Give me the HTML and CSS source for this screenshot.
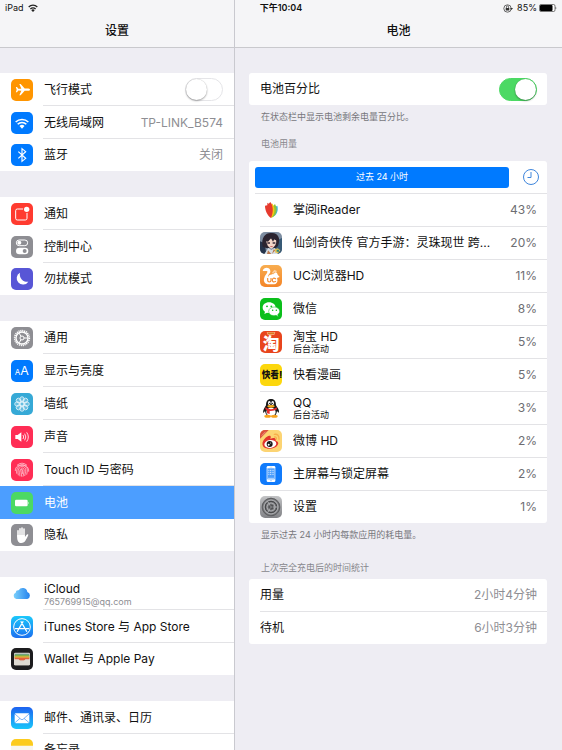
FILE: index.html
```html
<!DOCTYPE html>
<html lang="zh-CN">
<head>
<meta charset="utf-8">
<meta name="viewport" content="width=device-width, initial-scale=1">
<title>设置</title>
<link rel="stylesheet" href="styles.css">
</head>
<body>
<div class="app">
  <nav class="pane sidebar" aria-label="设置">
    <header class="navbar"><h1>设置</h1></header>

    <div class="group">
      <div class="row">
        <svg class="icon" viewBox="0 0 66 66"><rect width="66" height="66" rx="15" fill="#ff9500"/><path fill="#fff" d="M57 32C57 29 53 28.500 49 28.500H41L29 15H25L31 29L22 29.500L18 24H14.500L17 32L14.500 40H18L22 34.500L31 35L25 49H29L41 35.500H49C53 35.500 57 35 57 32Z"/></svg>
        <label class="label" for="airplane">飞行模式</label>
        <input class="switch" type="checkbox" role="switch" id="airplane">
      </div>
      <a class="row" href="#wifi">
        <svg class="icon" viewBox="0 0 66 66"><rect width="66" height="66" rx="15" fill="#007aff"/><g fill="none" stroke="#fff" stroke-width="4.500"><path d="M14 30A27 27 0 0 1 52 30"/><path d="M20 37A18 18 0 0 1 46 37"/></g><path fill="#fff" d="M33 50L25.500 42A11 11 0 0 1 40.500 42Z"/></svg>
        <span class="label">无线局域网</span><span class="value">TP-LINK_B574</span>
      </a>
      <a class="row" href="#bluetooth">
        <svg class="icon" viewBox="0 0 66 66"><rect width="66" height="66" rx="15" fill="#007aff"/><path fill="none" stroke="#fff" stroke-width="3.500" d="M22 23L44 43L33 52V14L44 23L22 43"/></svg>
        <span class="label">蓝牙</span><span class="value">关闭</span>
      </a>
    </div>

    <div class="group">
      <a class="row" href="#notifications">
        <svg class="icon" viewBox="0 0 66 66"><rect width="66" height="66" rx="15" fill="#ff3b30"/><rect x="14" y="18" width="34" height="33" rx="5" fill="none" stroke="#fff" stroke-width="3"/><circle cx="47" cy="19" r="11" fill="#ff3b30"/><circle cx="47" cy="19" r="8" fill="#fff"/></svg>
        <span class="label">通知</span>
      </a>
      <a class="row" href="#control-center">
        <svg class="icon" viewBox="0 0 66 66"><rect width="66" height="66" rx="15" fill="#8e8e93"/><rect x="16" y="12" width="34" height="17" rx="8.500" fill="none" stroke="#fff" stroke-width="3"/><circle cx="25" cy="20.500" r="6" fill="#fff"/><rect x="15" y="35" width="37" height="20" rx="10" fill="#fff"/><circle cx="41" cy="45" r="6" fill="#8e8e93"/></svg>
        <span class="label">控制中心</span>
      </a>
      <a class="row" href="#dnd">
        <svg class="icon" viewBox="0 0 66 66"><rect width="66" height="66" rx="15" fill="#5856d6"/><path fill="#fff" d="M27 14A19 19 0 1 0 52 41A22 22 0 0 1 27 14Z"/></svg>
        <span class="label">勿扰模式</span>
      </a>
    </div>

    <div class="group">
      <a class="row" href="#general">
        <svg class="icon" viewBox="0 0 66 66"><rect width="66" height="66" rx="15" fill="#8e8e93"/><g fill="none" stroke="#fff"><circle cx="33" cy="33" r="22" stroke-width="5" stroke-dasharray="3.400 2.359"/><circle cx="33" cy="33" r="18" stroke-width="4"/><circle cx="33" cy="33" r="6" stroke-width="3"/><path stroke-width="3" d="M39 33H50M30 28L24.500 18.500M30 38L24.500 47.500"/></g></svg>
        <span class="label">通用</span>
      </a>
      <a class="row" href="#display">
        <svg class="icon" viewBox="0 0 66 66"><rect width="66" height="66" rx="15" fill="#007aff"/><text class="glyph" x="11" y="45" font-size="24">A</text><text class="glyph" x="28" y="45" font-size="37">A</text></svg>
        <span class="label">显示与亮度</span>
      </a>
      <a class="row" href="#wallpaper">
        <svg class="icon" viewBox="0 0 66 66"><rect width="66" height="66" rx="15" fill="#36a9d6"/><g fill="#fff" fill-opacity=".25" stroke="#fff" stroke-width="2"><ellipse cx="33" cy="19" rx="6.500" ry="8"/><ellipse cx="33" cy="19" rx="6.500" ry="8" transform="rotate(45 33 33)"/><ellipse cx="33" cy="19" rx="6.500" ry="8" transform="rotate(90 33 33)"/><ellipse cx="33" cy="19" rx="6.500" ry="8" transform="rotate(135 33 33)"/><ellipse cx="33" cy="19" rx="6.500" ry="8" transform="rotate(180 33 33)"/><ellipse cx="33" cy="19" rx="6.500" ry="8" transform="rotate(225 33 33)"/><ellipse cx="33" cy="19" rx="6.500" ry="8" transform="rotate(270 33 33)"/><ellipse cx="33" cy="19" rx="6.500" ry="8" transform="rotate(315 33 33)"/><circle cx="33" cy="33" r="6"/></g></svg>
        <span class="label">墙纸</span>
      </a>
      <a class="row" href="#sounds">
        <svg class="icon" viewBox="0 0 66 66"><rect width="66" height="66" rx="15" fill="#ff2d55"/><path fill="#fff" d="M13 27H20L31 19V47L20 39H13Z"/><g fill="none" stroke="#fff" stroke-width="2.500"><path d="M36 27Q40 33 36 39"/><path d="M41 23Q48 33 41 43"/><path d="M47 19Q57 33 47 47"/></g></svg>
        <span class="label">声音</span>
      </a>
      <a class="row" href="#touch-id">
        <svg class="icon" viewBox="0 0 66 66"><rect width="66" height="66" rx="15" fill="#ff2d55"/><g fill="none" stroke="#fff" stroke-opacity=".85" stroke-width="2"><path d="M18 19Q33 6 48 19"/><path d="M13 36C11 12 55 10 53 38"/><path d="M17 44C13 10 52 12 49 36L47 47"/><path d="M22 49C15 15 48 16 44 37L41 51"/><path d="M27 52C21 21 43 22 39 38L36 53"/><path d="M32 53L30 35Q33 25 35 36L34 45"/></g></svg>
        <span class="label">Touch ID 与密码</span>
      </a>
      <a class="row selected" href="#battery" aria-current="page">
        <svg class="icon" viewBox="0 0 66 66"><rect width="66" height="66" rx="15" fill="#4cd964"/><rect x="12" y="23" width="38" height="20" rx="4" fill="#fff"/><path fill="#fff" d="M52 29Q56 33 52 37Z"/></svg>
        <span class="label">电池</span>
      </a>
      <a class="row" href="#privacy">
        <svg class="icon" viewBox="0 0 66 66"><rect width="66" height="66" rx="15" fill="#8e8e93"/><g fill="none" stroke="#fff" stroke-width="4.500" stroke-linecap="round"><path d="M21 20V38M27 14V36M33 12V36M39 15V38"/></g><path fill="#fff" d="M18.500 33H41.500V39C45 36 47 30 51 31C54 32 48 42 44 49C41 55 37 57 31 57C22 57 18.500 49 18.500 41Z"/></svg>
        <span class="label">隐私</span>
      </a>
    </div>

    <div class="group">
      <a class="row" href="#icloud">
        <svg class="icon" viewBox="0 0 66 66"><defs><linearGradient id="cloud" x1="0" x2="1"><stop stop-color="#7bd0fb"/><stop offset="1" stop-color="#2482ee"/></linearGradient></defs><path fill="url(#cloud)" d="M16 48A10 10 0 0 1 14 29A8 8 0 0 1 23 22A14 14 0 0 1 49 27A11 11 0 0 1 49 48Z"/></svg>
        <span class="label">iCloud<small class="account">765769915@qq.com</small></span>
      </a>
      <a class="row" href="#store">
        <svg class="icon" viewBox="0 0 66 66"><defs><linearGradient id="store" x2="0" y2="1"><stop stop-color="#1bc8fb"/><stop offset="1" stop-color="#1c70f0"/></linearGradient></defs><rect width="66" height="66" rx="15" fill="url(#store)"/><g fill="none" stroke="#fff" stroke-width="3.500"><circle cx="33" cy="33" r="25" stroke-width="3"/><path d="M36 17L19 46M30 17L47 46M13 38H39M45 38H53" stroke-linecap="round"/></g></svg>
        <span class="label">iTunes Store 与 App Store</span>
      </a>
      <a class="row" href="#wallet">
        <svg class="icon" viewBox="0 0 66 66"><rect width="66" height="66" rx="15" fill="#1c1c1e"/><rect x="9" y="14" width="48" height="38" rx="4" fill="#d8d4cc"/><rect x="11" y="17" width="44" height="8" rx="3" fill="#6a9c9a"/><rect x="11" y="20" width="44" height="9" fill="#7fb04b"/><rect x="11" y="25" width="44" height="6" fill="#e3b43b"/><rect x="11" y="29" width="44" height="8" fill="#e2613c"/><path fill="#dedad2" d="M9 34H23Q27 41 33 41Q39 41 43 34H57V49Q57 52 54 52H12Q9 52 9 49Z"/></svg>
        <span class="label">Wallet 与 Apple Pay</span>
      </a>
    </div>

    <div class="group">
      <a class="row" href="#mail">
        <svg class="icon" viewBox="0 0 66 66"><defs><linearGradient id="mail" x2="0" y2="1"><stop stop-color="#1d62f0"/><stop offset="1" stop-color="#19c7fb"/></linearGradient></defs><rect width="66" height="66" rx="15" fill="url(#mail)"/><rect x="11" y="19" width="44" height="30" rx="4" fill="#fff"/><path fill="none" stroke="#3b90f3" stroke-width="2" d="M12 21L30 37Q33 39 36 37L54 21M12 47L27 34M54 47L39 34"/></svg>
        <span class="label">邮件、通讯录、日历</span>
      </a>
      <a class="row" href="#notes">
        <svg class="icon" viewBox="0 0 66 66"><rect width="66" height="66" rx="15" fill="#f8f6ee"/><path fill="#fccb1d" d="M0 20V15A15 15 0 0 1 15 0H51A15 15 0 0 1 66 15V20Z"/><path stroke="#c9c6bd" stroke-width="2" d="M0 35H66M0 50H66"/></svg>
        <span class="label">备忘录</span>
      </a>
    </div>
  </nav>

  <main class="pane detail">
    <header class="navbar"><h2>电池</h2></header>

    <div class="card">
      <div class="row">
        <label class="label" for="percentage">电池百分比</label>
        <input class="switch" type="checkbox" role="switch" id="percentage" checked>
      </div>
    </div>
    <p class="note">在状态栏中显示电池剩余电量百分比。</p>

    <h3 class="heading">电池用量</h3>
    <div class="card usage">
      <div class="row tabs">
        <button class="period" type="button">过去 24 小时</button>
        <button class="clock" type="button" aria-label="显示使用时间"><svg viewBox="0 0 18 18"><circle cx="9" cy="9" r="7.500"/><path d="M9 4V9.500H5.500"/></svg></button>
      </div>
      <div class="row">
        <svg class="icon" viewBox="0 0 66 66"><path fill="#3bb7d9" d="M38 53C50 49 56 34 52 20C43 23 36 39 38 53Z"/><path fill="#8fc13a" d="M35 56C50 50 54 30 45 15C34 23 30 43 35 56Z"/><path fill="#f9c80e" d="M34 57C46 45 46 25 36 13C27 25 27 43 34 57Z"/><path fill="#e63a2e" d="M33 57C41 40 40 20 31 9L26 14L22 11V19L15 20C15 34 22 49 33 57Z"/></svg>
        <span class="label">掌阅iReader</span><span class="value">43%</span>
      </div>
      <div class="row">
        <svg class="icon" viewBox="0 0 66 66"><defs><clipPath id="tile"><rect width="66" height="66" rx="15"/></clipPath></defs><g clip-path="url(#tile)"><path fill="#7d8da1" d="M0 0H66V66H0Z"/><path fill="#25334a" d="M0 28L14 34L19 66H0Z"/><path fill="#385a76" d="M48 26L66 18V66H46Z"/><path fill="#2b2430" d="M8 44C2 15 18 1 35 3C54 2 63 19 54 42L47 48H19Z"/><path fill="#f3d5c6" d="M18 24Q34 13 49 25Q50 43 34 50Q21 46 18 24Z"/><path fill="#2b2430" d="M14 26Q17 9 34 9Q49 9 53 28L43 22L39 29L33 19L24 29Z"/><path fill="#3b2b38" d="M22 31H30V35H22ZM38 31H46V35H38Z"/><path fill="#c44b4b" d="M31 42H38V44H31Z"/><path fill="#d7dfe5" d="M13 66L25 48L34 54L44 48L54 66Z"/><path fill="#b9774d" d="M24 55L34 66H21ZM41 52L46 55L36 66Z"/><path fill="#e8c452" d="M44 52L53 49L61 55L54 64L46 62Z"/><path fill="#2d8a7a" d="M50 53H57V59H50Z"/></g></svg>
        <span class="label">仙剑奇侠传 官方手游：灵珠现世 跨...</span><span class="value">20%</span>
      </div>
      <div class="row">
        <svg class="icon" viewBox="0 0 66 66"><defs><linearGradient id="uc" x2="0" y2="1"><stop stop-color="#f8ad4f"/><stop offset="1" stop-color="#f48528"/></linearGradient></defs><rect width="66" height="66" rx="15" fill="url(#uc)"/><path fill="#fff" d="M8 18C11 5 30 6 31 18C32 26 23 29 24 36C30 25 40 31 43 25C46 19 52 23 53 29L59 36L51 39C55 49 50 57 43 58H27C14 58 9 48 13 38C15 30 23 25 22 19C19 16 14 19 8 18Z"/><path fill="none" stroke="#f48d32" stroke-width="3.500" d="M23 39V46Q23 51 28 51Q33 51 33 46V39M48 42Q38 36 37 45Q37 54 48 49"/><path fill="#fbd1a2" d="M36 23L43 14L51 18L48 23L42 21L40 27Z"/></svg>
        <span class="label">UC浏览器HD</span><span class="value">11%</span>
      </div>
      <div class="row">
        <svg class="icon" viewBox="0 0 66 66"><rect width="66" height="66" rx="15" fill="#0bbf1b"/><path fill="#fff" d="M27 13C16 13 8 20 8 29C8 34 11 38 15 41L13 48L21 44C23 45 25 45 28 45C39 45 47 38 47 29C47 20 38 13 27 13Z"/><path fill="#fff" stroke="#0bbf1b" stroke-width="1.500" d="M43 27C33 27 26 33 26 40C26 48 33 53 42 53L48 52L55 56L53 50C57 47 59 44 59 40C59 33 52 27 43 27Z"/><g fill="#0bbf1b"><circle cx="21" cy="25" r="2.800"/><circle cx="34" cy="25" r="2.800"/><circle cx="38" cy="37" r="2.300"/><circle cx="49" cy="37" r="2.300"/></g></svg>
        <span class="label">微信</span><span class="value">8%</span>
      </div>
      <div class="row">
        <svg class="icon" viewBox="0 0 66 66"><rect width="66" height="66" rx="15" fill="#e8451d"/><path fill="#f7a36d" d="M20 3H46L43 12H23Z"/><path fill="#d8791e" d="M24 5H42V9H24Z"/><text class="glyph heavy" x="8" y="57" font-size="50">淘</text></svg>
        <span class="label">淘宝 HD<small class="activity">后台活动</small></span><span class="value">5%</span>
      </div>
      <div class="row">
        <svg class="icon" viewBox="0 0 66 66"><rect width="66" height="66" rx="15" fill="#fcd70d"/><text class="glyph heavy dark" x="5" y="43" font-size="26">快看!</text></svg>
        <span class="label">快看漫画</span><span class="value">5%</span>
      </div>
      <div class="row">
        <svg class="icon" viewBox="0 0 66 66"><path fill="#181818" d="M33 6C22 6 18 14 18 25C14 32 9 38 9 47C11 48 14 44 15 42C16 48 19 54 23 57H44C48 54 50 48 51 42C53 45 56 48 57 46C58 38 52 32 48 25C48 14 44 6 33 6Z"/><ellipse cx="33" cy="45" rx="14" ry="13" fill="#fff"/><ellipse cx="28" cy="18" rx="4" ry="6" fill="#fff"/><ellipse cx="38" cy="18" rx="4" ry="6" fill="#fff"/><circle cx="29" cy="19" r="2"/><circle cx="37" cy="19" r="2"/><ellipse cx="33" cy="28" rx="11" ry="4" fill="#f8ac1d"/><path fill="#e52a2d" d="M16 31Q33 43 50 31L51 37Q42 43 29 42V51L21 49V40L16 37Z"/><ellipse cx="23" cy="58" rx="10" ry="4.500" fill="#f7a21c"/><ellipse cx="43" cy="58" rx="10" ry="4.500" fill="#f7a21c"/></svg>
        <span class="label">QQ<small class="activity">后台活动</small></span><span class="value">3%</span>
      </div>
      <div class="row">
        <svg class="icon" viewBox="0 0 66 66"><g clip-path="url(#tile)"><path fill="#fcd473" d="M0 0H66V66H0Z"/><path fill="#dc4f3d" d="M0 0H26L0 26Z"/><path stroke="#f3b6a3" stroke-width="2" d="M5 17L17 5"/><path fill="#e2332c" d="M28 17C33 16 33 22 31 27C40 22 49 24 47 32C54 34 57 39 53 45C46 57 23 60 12 52C-1 40 16 19 28 17Z"/><ellipse cx="31" cy="42" rx="18" ry="12" fill="#fff" transform="rotate(-7 31 42)"/><circle cx="29" cy="42" r="9" fill="#171717"/><circle cx="26" cy="44" r="3" fill="#fff"/><circle cx="32" cy="39" r="1.500" fill="#fff"/><path fill="none" stroke="#f7ae4a" stroke-width="4" stroke-linecap="round" d="M43 13Q58 11 57 28M44 21Q50 20 49 27"/></g></svg>
        <span class="label">微博 HD</span><span class="value">2%</span>
      </div>
      <div class="row">
        <svg class="icon" viewBox="0 0 66 66"><rect width="66" height="66" rx="15" fill="#117bfb"/><rect x="20" y="9" width="26" height="48" rx="4" fill="#fff"/><rect x="22" y="16" width="22" height="33" fill="#4b9dfc"/><path stroke="#d3e7ff" stroke-width="3" stroke-dasharray="3 2" d="M25 22H42M25 28H42M25 34H42"/><path stroke="#b5d7ff" stroke-width="3" d="M24 46H42"/><path stroke="#a7b8cc" stroke-width="1.500" d="M29 12.500H37"/><circle cx="33" cy="53" r="2" fill="#83b8f7"/></svg>
        <span class="label">主屏幕与锁定屏幕</span><span class="value">2%</span>
      </div>
      <div class="row">
        <svg class="icon" viewBox="0 0 66 66"><defs><linearGradient id="steel" x2="0" y2="1"><stop stop-color="#c2c3c5"/><stop offset="1" stop-color="#818286"/></linearGradient></defs><rect width="66" height="66" rx="15" fill="url(#steel)"/><circle cx="33" cy="33" r="28" fill="#77787b"/><g fill="none" stroke="#434446"><circle cx="33" cy="33" r="26" stroke-width="3" stroke-dasharray="2 1.500"/><circle cx="33" cy="33" r="21" stroke="#b1b2b5" stroke-width="3"/><circle cx="33" cy="33" r="17" stroke-width="3"/><circle cx="33" cy="33" r="12" stroke="#a8a9ac" stroke-width="3"/><circle cx="33" cy="33" r="6" stroke-width="3"/><path stroke="#a8a9ac" stroke-width="3" d="M38 33H54M30 29L22 15M30 37L22 51"/></g></svg>
        <span class="label">设置</span><span class="value">1%</span>
      </div>
    </div>
    <p class="note">显示过去 24 小时内每款应用的耗电量。</p>

    <h3 class="heading spaced">上次完全充电后的时间统计</h3>
    <div class="card times">
      <div class="row"><span class="label">用量</span><span class="value">2小时4分钟</span></div>
      <div class="row"><span class="label">待机</span><span class="value">6小时3分钟</span></div>
    </div>
  </main>

  <div class="statusbar">
    <span class="status-side">iPad <svg class="status-wifi" viewBox="0 0 10 8"><path fill="none" stroke="#222" stroke-width="1.300" d="M.7 3A6 6 0 0 1 9.300 3M2.400 5A3.700 3.700 0 0 1 7.600 5"/><path fill="#222" d="M5 8L3.300 6.200A2.400 2.400 0 0 1 6.700 6.200Z"/></svg></span>
    <time class="status-time">下午10:04</time>
    <span class="status-side end">
      <svg class="status-lock" viewBox="0 0 10 9"><circle cx="4.500" cy="4.500" r="3.700" fill="none" stroke="#444" stroke-width=".8"/><path fill="#333" d="M2.700 4H6.300V6.500H2.700ZM7 4H10L8.500 6Z"/><path fill="none" stroke="#333" stroke-width=".7" d="M3.400 4V3A1.100 1.100 0 0 1 5.600 3V4"/></svg>
      <span class="status-level">85% <svg class="status-battery" viewBox="0 0 18 8"><rect x=".5" y=".5" width="15.500" height="7" rx="1.500" fill="#fff" stroke="#222" stroke-width=".6"/><rect x="1" y="1" width="12.500" height="6" rx="1"/><path d="M16.700 2.700Q18 4 16.700 5.300Z"/></svg></span>
    </span>
  </div>
</div>
</body>
</html>
```
FILE: styles.css
```css
* {
  box-sizing: border-box;
}

body {
  margin: 0;
  background: #eeedf3;
  color: #111;
  font: 12px/16px Inter, "Noto Sans CJK SC", sans-serif;
}

h1,
h2,
h3,
p {
  margin: 0;
}

.app {
  display: grid;
  grid-template: 16px minmax(0, 1fr) / 235px minmax(0, 1fr);
  height: 100vh;
  overflow: hidden;
}

.pane {
  grid-row: 1 / -1;
  min-width: 0;
  overflow: hidden;
}

.sidebar {
  grid-column: 1;
  border-right: 1px solid #c9c9cf;
}

.detail {
  grid-column: 2;
}

.navbar {
  height: 48px;
  padding-top: 15px;
  margin-bottom: 25px;
  background: #f5f5f7;
  border-bottom: 1px solid #c9c9cd;
  text-align: center;
}

.navbar h1,
.navbar h2 {
  margin: 0;
  font-size: 12px;
  line-height: 32px;
  font-weight: 500;
}

/* status bar, laid over the top of both panes */
.statusbar {
  grid-area: 1 / 1 / 2 / -1;
  display: grid;
  grid-template-columns: 1fr auto 1fr;
  align-items: center;
  padding: 0 5px;
  font-size: 9px;
  z-index: 1;
}

.status-side,
.status-level {
  display: flex;
  align-items: center;
  gap: 4px;
}

.status-level {
  gap: 2px;
}

.end {
  justify-content: flex-end;
}

.status-time {
  font-weight: 600;
}

.status-wifi {
  width: 10px;
  height: 8px;
}

.status-lock {
  width: 10px;
  height: 9px;
}

.status-battery {
  width: 18px;
  height: 8px;
}

/* rows shared by both panes */
.group {
  margin-bottom: 26px;
  background: #fff;
}

.row {
  display: flex;
  align-items: center;
  gap: 11px;
  height: 33px;
  color: inherit;
  text-decoration: none;
}

.row:last-child {
  height: 32px;
}

.group .row {
  padding-left: 11px;
}

.icon {
  flex: none;
  width: 22px;
  height: 22px;
}

.label {
  flex: 1;
  min-width: 0;
  overflow: hidden;
  text-overflow: ellipsis;
  white-space: nowrap;
}

.value {
  color: #8e8e93;
}

.group .label {
  line-height: 32px;
}

.group .value,
.group .switch {
  margin-right: 11px;
}

.group .row:not(:last-child) {
  background: linear-gradient(#e3e3e6, #e3e3e6) 43px 100% / 100% 1px no-repeat;
}

.group .row.selected {
  background: #4c9eff;
  color: #fff;
}

.account,
.activity {
  display: block;
  font-size: 9px;
  line-height: 10px;
}

.account {
  color: #8e8e93;
}

.group .label:has(.account) {
  line-height: 16px;
}

.card .label:has(.activity) {
  line-height: 14px;
}

.glyph {
  fill: #fff;
}

.heavy {
  font-weight: 900;
}

.dark {
  fill: #111;
}

.switch {
  appearance: none;
  display: flex;
  flex: none;
  width: 38px;
  height: 23px;
  margin: 0;
  border: 1px solid #e5e5e8;
  border-radius: 12px;
  background: #fff;
}

.switch::before {
  content: "";
  width: 21px;
  height: 21px;
  border-radius: 50%;
  background: #fff;
  box-shadow: 0 1px 2px #0005, 0 0 1px #0003;
}

.switch:checked {
  justify-content: flex-end;
  background: #4cd964;
  border-color: #4cd964;
}

/* detail pane */
.card {
  margin: 0 15px 0 14px;
  padding: 0 10px 0 11px;
  background: #fff;
  border-radius: 3px;
}

.card .row:not(:last-child) {
  margin-right: -10px;
  padding-right: 10px;
  border-bottom: 1px solid #e3e3e6;
}

.usage .value {
  color: #6d6d72;
}

.card .row.tabs {
  gap: 13px;
  margin-left: -5px;
  padding-right: 7px;
}

.period {
  flex: 1;
  height: 21px;
  padding: 0;
  border: 0;
  border-radius: 3px;
  background: #007aff;
  color: #fff;
  font: inherit;
  font-size: 9px;
}

.clock {
  width: 18px;
  height: 18px;
  padding: 0;
  border: 0;
  background: none;
}

.clock svg {
  display: block;
  fill: none;
  stroke: #3f86dc;
}

.note,
.heading {
  padding: 0 26px;
  color: #77777c;
  font-size: 9px;
  font-weight: 400;
  line-height: 12px;
}

.note {
  padding-top: 6px;
}

.heading {
  padding-top: 15px;
  padding-bottom: 11px;
  color: #87878c;
}

.heading.spaced {
  padding-top: 21px;
  padding-bottom: 5px;
}
```
